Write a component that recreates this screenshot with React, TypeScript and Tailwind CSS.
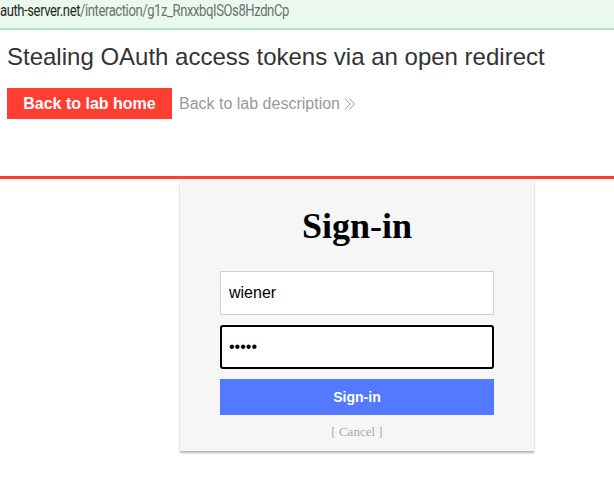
export default function App() {
  return (
    <div className="w-[614px] h-[479px] bg-white overflow-hidden relative" style={{ fontFamily: '"Liberation Sans", Arial, sans-serif' }}>
      <div className="h-[30px] bg-[#eaf8ef] border-b-[2px] border-[#b6e2c4] pt-[2px] text-[16px] leading-[18px] tracking-[-0.5px] whitespace-nowrap" style={{ fontFamily: 'Roboto, sans-serif' }}>
        <span className="inline-block origin-left scale-x-[0.815]">
          <span className="text-[#1e2a22]">auth-server.net</span>
          <span className="text-[#6b716d]">/interaction/g1z_RnxxbqISOs8HzdnCp</span>
        </span>
      </div>
      <div className="px-[7px]">
        <h1 className="text-[24px] leading-[28px] text-[#333] mt-[13px]">Stealing OAuth access tokens via an open redirect</h1>
        <div className="flex items-center mt-[17px] h-[31px]">
          <div className="bg-[#ff3d33] text-white font-bold text-[16px] h-[31px] w-[165px] flex items-center justify-center">Back to lab home</div>
          <div className="ml-[7px] text-[#999] text-[16px] flex items-center">
            Back to lab description
            <svg width="12" height="14" viewBox="0 0 12 14" className="ml-[4px]" fill="none" stroke="#999" strokeWidth="1">
              <path d="M1 1.5 L6 7 L1 12.5" />
              <path d="M5.5 1.5 L10.5 7 L5.5 12.5" />
            </svg>
          </div>
        </div>
      </div>
      <div className="mt-[57px] h-[3px] bg-[#ff3d33]" />
      <div className="flex justify-center mt-[2px]">
        <div className="w-[354px] ml-[100px] bg-[#f6f6f6] shadow-[0_2px_2px_rgba(0,0,0,0.3)] flex flex-col items-center pt-[21px] pb-[10px]">
          <div className="text-[36px] font-bold text-black leading-[48px]" style={{ fontFamily: '"Liberation Serif", serif' }}>Sign-in</div>
          <div className="w-[274px] mt-[21px] flex flex-col">
            <div className="h-[44px] bg-white border border-[#d0d0d0] flex items-center px-[8px] text-[16px] text-black">wiener</div>
            <div className="h-[44px] mt-[10px] bg-white border-2 border-black rounded-[3px] flex items-center px-[7px] text-[16px] text-black">•••••</div>
            <div className="h-[36px] mt-[10px] bg-[#5279ff] flex items-center justify-center text-white font-bold text-[14px]">Sign-in</div>
            <div className="text-center text-[#aaa] text-[13px] mt-[8px] leading-[18px]" style={{ fontFamily: '"Liberation Serif", serif' }}>[ Cancel ]</div>
          </div>
        </div>
      </div>
    </div>
  );
}
